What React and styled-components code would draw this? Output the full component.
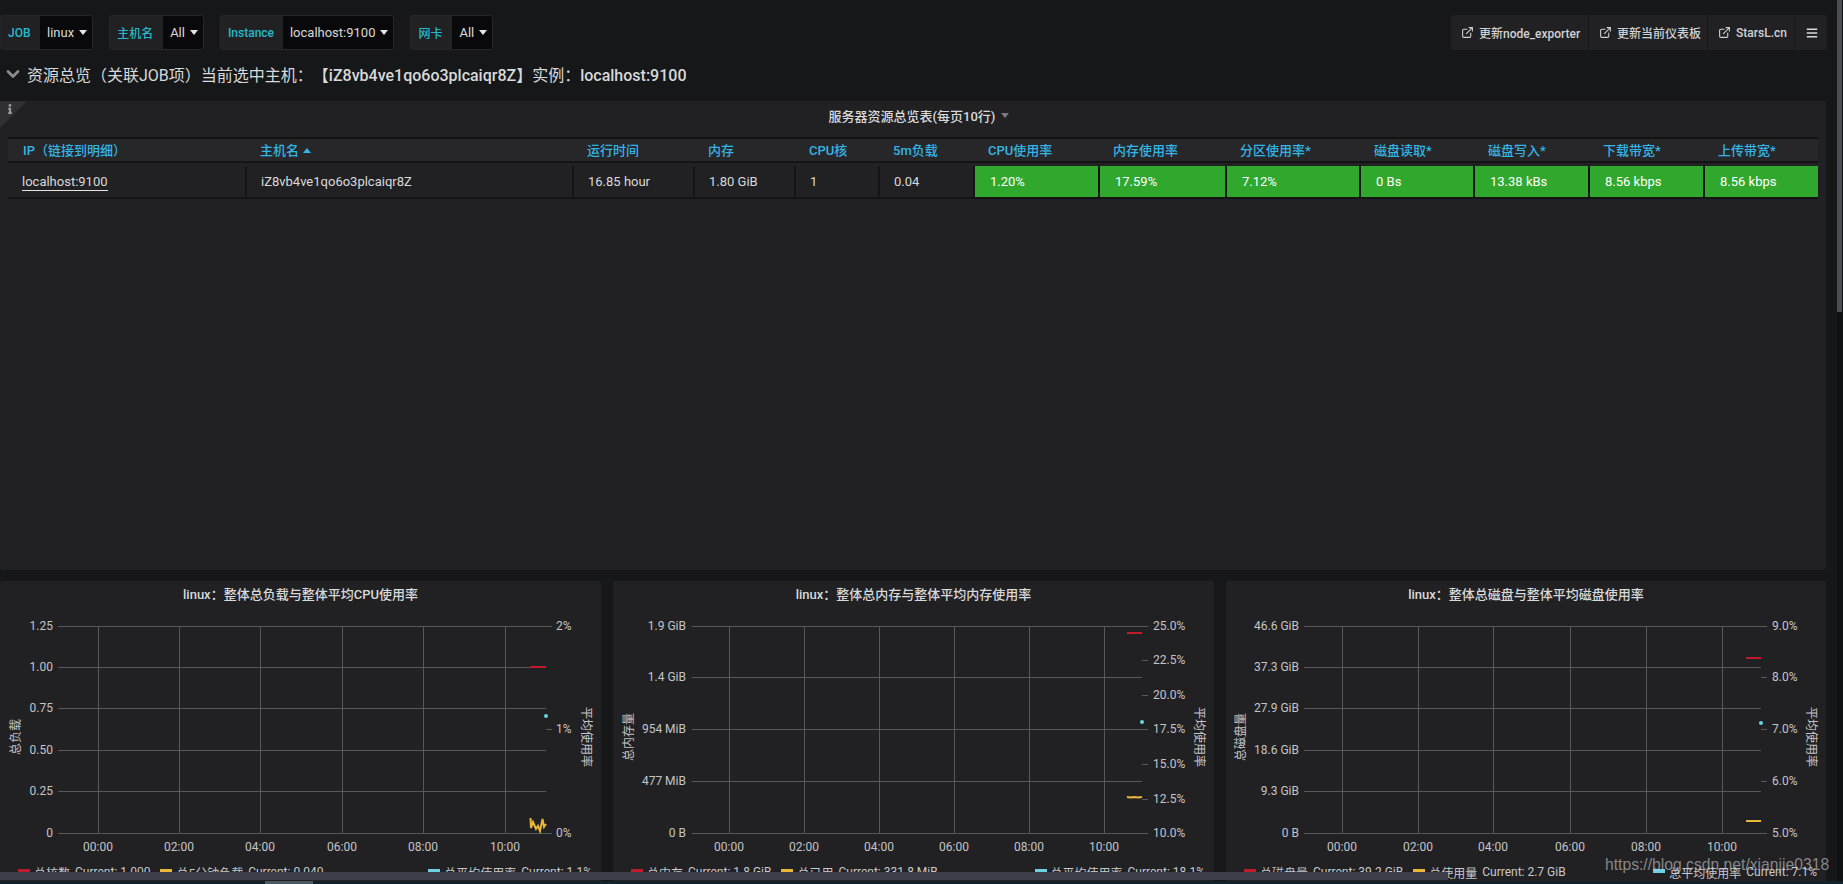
import styled, { createGlobalStyle } from 'styled-components';
import { ExternalLink, ChevronDown } from 'lucide-react';
import { FaBars, FaInfo } from 'react-icons/fa';

const GlobalStyle = createGlobalStyle`
  html, body {
    margin: 0;
    height: 100%;
    background: #161719;
    overflow: hidden;
  }
  body {
    color: #d8d9da;
    font-family: Roboto, "Noto Sans CJK SC", sans-serif;
    font-size: 13px;
  }
  * {
    box-sizing: border-box;
  }
`;

const Page = styled.div`
  position: relative;
  height: 100vh;
  overflow: hidden;
`;

const Toolbar = styled.div`
  display: flex;
  justify-content: space-between;
  padding: 15px 16px 0 0;
`;

const Variables = styled.div`
  display: flex;
  gap: 16px;
`;

const Variable = styled.div`
  display: flex;
  height: 35px;
  border: 1px solid #25252a;
  border-radius: 3px;
  overflow: hidden;
  background: #212124;
`;

const VariableLabel = styled.div`
  display: flex;
  align-items: center;
  width: ${(props) => props.$width}px;
  padding-left: 7px;
  color: #26b9cc;
  font-weight: 500;
  font-size: 12px;
`;

const VariableSelect = styled.div`
  display: flex;
  align-items: center;
  gap: 5px;
  padding: 0 5px 0 7px;
  background: #09090b;
  color: #d8d9da;
`;

const DownCaret = styled.span`
  width: 0;
  height: 0;
  border-left: 4px solid transparent;
  border-right: 4px solid transparent;
  border-top: 5px solid ${(props) => props.$color || '#e4e4e4'};
`;

const UpCaret = styled.span`
  display: inline-block;
  width: 0;
  height: 0;
  margin-left: 4px;
  vertical-align: 2px;
  border-left: 4px solid transparent;
  border-right: 4px solid transparent;
  border-bottom: 5px solid #33b5e5;
`;

const LinkBar = styled.div`
  display: flex;
  height: 35px;
  border-radius: 3px;
  background: #212124;
`;

const LinkButton = styled.div`
  display: flex;
  align-items: center;
  gap: 5px;
  width: ${(props) => props.$width}px;
  padding-left: 10px;
  border-right: 1px solid #161719;
  font-weight: 500;
  font-size: 12px;
  color: #d0d1d3;
`;

const MenuButton = styled.div`
  display: flex;
  align-items: center;
  width: 32px;
  padding-left: 11px;
  color: #d8d9da;
`;

const RowTitle = styled.div`
  display: flex;
  align-items: center;
  gap: 4px;
  height: 51px;
  padding: 0 0 3px 3px;
  font-size: 16px;
  color: #d8d9da;
`;

const Strong = styled.span`
  font-weight: 500;
  margin-left: ${(props) => props.$gap || 0}px;
`;

const TablePanel = styled.section`
  position: relative;
  height: 469px;
  margin-right: 17px;
  padding: 0 8px;
  border-radius: 3px;
  background: #212124;
`;

const CornerFlag = styled.div`
  position: absolute;
  top: 0;
  left: 0;
  width: 27px;
  height: 27px;
  padding: 3px 0 0 5px;
  background: #303034;
  clip-path: polygon(0 0, 100% 0, 0 100%);
  color: #9a9a9a;
  font-size: 10px;
`;

const PanelHeading = styled.div`
  display: flex;
  align-items: center;
  justify-content: center;
  gap: 6px;
  height: 36px;
  padding: 0 0 8px 12px;
  font-weight: 500;
  color: #d8d9da;
`;

const columns = '239px 327px 121px 101px 84px 95px 125px 127px 134px 114px 115px 115px 113px';

const HeadRow = styled.div`
  display: grid;
  grid-template-columns: ${columns};
  height: 26px;
  border-top: 2px solid #141414;
  border-bottom: 2px solid #141414;
  background: #27272a;
`;

const HeadCell = styled.div`
  display: flex;
  align-items: center;
  padding: 0 0 1px 13px;
  color: #33b5e5;
  font-weight: 500;
  white-space: nowrap;
  &:first-child {
    padding-left: 15px;
  }
`;

const BodyRow = styled.div`
  display: grid;
  grid-template-columns: ${columns};
  height: 33px;
  margin-top: 3px;
  border-bottom: 2px solid #141414;
`;

const Cell = styled.div`
  display: flex;
  align-items: center;
  padding: 0 0 1px 14px;
  border-right: 2px solid #141414;
  white-space: nowrap;
  &:last-child {
    border-right: 0;
  }
`;

const GreenCell = styled(Cell)`
  background: #2fa82d;
  color: #fff;
  padding-left: 15px;
`;

const HostLink = styled.span`
  border-bottom: 1px solid #e4e4e4;
  padding-bottom: 1px;
  margin-top: 2px;
`;

const ChartRow = styled.div`
  display: grid;
  grid-template-columns: 601px 601px 600px;
  column-gap: 12px;
  margin-top: 11px;
`;

const ChartPanel = styled.section`
  height: 320px;
  border-radius: 3px;
  background: #212124;
`;

const ChartTitle = styled.div`
  height: 28px;
  line-height: 28px;
  text-align: center;
  font-weight: 500;
  color: #d8d9da;
`;

const Plot = styled.svg`
  display: block;
  width: 100%;
  height: 250px;
`;

const AxisText = styled.text`
  fill: #c4c4c6;
  font-size: 12px;
  dominant-baseline: central;
`;

const GridLine = styled.line`
  stroke: #58585b;
  stroke-width: 1;
`;

const Legend = styled.div`
  display: flex;
  justify-content: space-between;
  align-items: center;
  height: 26px;
  padding: 0 9px 0 18px;
  color: #c8c8ca;
  font-size: 12px;
  white-space: nowrap;
`;

const LegendGroup = styled.div`
  display: flex;
  gap: 10px;
`;

const LegendItem = styled.div`
  display: flex;
  align-items: center;
  gap: 5px;
`;

const Swatch = styled.span`
  width: 12px;
  height: 4px;
  margin-right: -1px;
  margin-bottom: 2px;
  background: ${(props) => props.$color};
`;

const ScrollTrack = styled.div`
  position: absolute;
  top: 0;
  right: 0;
  bottom: 0;
  width: 6px;
  background: #101113;
`;

const ScrollThumb = styled.div`
  height: 312px;
  width: 5px;
  background: #4c4c54;
`;

const BottomOverlay = styled.div`
  position: absolute;
  left: 0;
  right: 0;
  bottom: 0;
  height: 12px;
`;

const OverlayBar = styled.div`
  width: 1448px;
  height: 8px;
  background: #3e3e4a;
`;

const OverlayStrip = styled.div`
  height: 3px;
  margin-top: 1px;
  padding-left: 265px;
  background: #12222a;
`;

const OverlayThumb = styled.div`
  width: 48px;
  height: 100%;
  background: #4a5a62;
`;

const Watermark = styled.div`
  position: absolute;
  left: 1605px;
  top: 856px;
  font-family: "Liberation Sans", sans-serif;
  font-size: 15.7px;
  color: rgba(205, 205, 205, 0.6);
  white-space: nowrap;
`;

const RED = '#bf1b2c';
const YELLOW = '#eab839';
const CYAN = '#6ed0e0';

const times = ['00:00', '02:00', '04:00', '06:00', '08:00', '10:00'];

const headers = ['IP（链接到明细）', '主机名', '运行时间', '内存', 'CPU核', '5m负载', 'CPU使用率', '内存使用率', '分区使用率*', '磁盘读取*', '磁盘写入*', '下载带宽*', '上传带宽*'];
const plainCells = ['16.85 hour', '1.80 GiB', '1', '0.04'];
const greenCells = ['1.20%', '17.59%', '7.12%', '0 Bs', '13.38 kBs', '8.56 kbps', '8.56 kbps'];

// all x values are page coordinates, y values are page coordinates too
const charts = [
  {
    title: 'linux：整体总负载与整体平均CPU使用率',
    left: 0,
    width: 601,
    gridLeft: 58,
    gridRight: 546,
    tickEnd: 552,
    verticals: [98, 179, 260, 342, 423, 505],
    leftTicks: [[626, '1.25'], [667, '1.00'], [708, '0.75'], [750, '0.50'], [791, '0.25'], [833, '0']],
    rightTicks: [[626, '2%'], [729, '1%'], [833, '0%']],
    leftTitle: '总负载',
    leftTitleX: 16,
    rightTitleX: 586,
    labelRight: 53,
    rightLabelX: 556,
    red: [530, 546, 667],
    yellow: '530.5,818 531,828 533,822 536,829 538,826 540,831 542.5,819 544,827 546,824',
    dot: [546, 716],
    legend: [
      ['总核数', 'Current: 1.000', RED],
      ['总5分钟负载', 'Current: 0.040', YELLOW],
      ['总平均使用率', 'Current: 1.1%', CYAN],
    ],
  },
  {
    title: 'linux：整体总内存与整体平均内存使用率',
    left: 613,
    width: 601,
    gridLeft: 692,
    gridRight: 1142,
    tickEnd: 1148,
    verticals: [729, 804, 879, 954, 1029, 1104],
    leftTicks: [[626, '1.9 GiB'], [677, '1.4 GiB'], [729, '954 MiB'], [781, '477 MiB'], [833, '0 B']],
    rightTicks: [[626, '25.0%'], [660, '22.5%'], [695, '20.0%'], [729, '17.5%'], [764, '15.0%'], [799, '12.5%'], [833, '10.0%']],
    leftTitle: '总内存量',
    leftTitleX: 629,
    rightTitleX: 1199,
    labelRight: 686,
    rightLabelX: 1153,
    red: [1127, 1142, 633],
    yellow: '1127,797 1131,797.5 1134,797 1138,797.5 1142,797',
    dot: [1142, 722],
    legend: [
      ['总内存', 'Current: 1.8 GiB', RED],
      ['总已用', 'Current: 331.8 MiB', YELLOW],
      ['总平均使用率', 'Current: 18.1%', CYAN],
    ],
  },
  {
    title: 'linux：整体总磁盘与整体平均磁盘使用率',
    left: 1226,
    width: 600,
    gridLeft: 1304,
    gridRight: 1761,
    tickEnd: 1767,
    verticals: [1342, 1418, 1493, 1570, 1646, 1722],
    leftTicks: [[626, '46.6 GiB'], [667, '37.3 GiB'], [708, '27.9 GiB'], [750, '18.6 GiB'], [791, '9.3 GiB'], [833, '0 B']],
    rightTicks: [[626, '9.0%'], [677, '8.0%'], [729, '7.0%'], [781, '6.0%'], [833, '5.0%']],
    leftTitle: '总磁盘量',
    leftTitleX: 1241,
    rightTitleX: 1811,
    labelRight: 1299,
    rightLabelX: 1772,
    red: [1746, 1761, 658],
    yellow: '1746,821 1761,821',
    dot: [1761, 723],
    legend: [
      ['总磁盘量', 'Current: 39.2 GiB', RED],
      ['总使用量', 'Current: 2.7 GiB', YELLOW],
      ['总平均使用率', 'Current: 7.1%', CYAN],
    ],
  },
];

const PLOT_TOP = 609;

function Chart({ chart }) {
  const toX = (x) => x - chart.left;
  const toY = (y) => y - PLOT_TOP;
  const yellowPoints = chart.yellow
    .split(' ')
    .map((p) => {
      const [x, y] = p.split(',').map(Number);
      return `${toX(x)},${toY(y)}`;
    })
    .join(' ');
  const midY = toY(737);

  return (
    <ChartPanel>
      <ChartTitle>{chart.title}</ChartTitle>
      <Plot viewBox={`0 0 ${chart.width} 250`}>
        {chart.verticals.map((x) => (
          <GridLine key={x} x1={toX(x) + 0.5} x2={toX(x) + 0.5} y1={toY(626)} y2={toY(833)} />
        ))}
        {chart.leftTicks.map(([y, label]) => (
          <g key={label}>
            <GridLine x1={toX(chart.gridLeft)} x2={toX(chart.gridRight)} y1={toY(y) + 0.5} y2={toY(y) + 0.5} />
            <AxisText x={toX(chart.labelRight)} y={toY(y)} textAnchor="end">
              {label}
            </AxisText>
          </g>
        ))}
        {chart.rightTicks.map(([y, label]) => (
          <g key={label}>
            <GridLine x1={toX(chart.gridRight)} x2={toX(chart.tickEnd)} y1={toY(y) + 0.5} y2={toY(y) + 0.5} />
            <AxisText x={toX(chart.rightLabelX)} y={toY(y)}>
              {label}
            </AxisText>
          </g>
        ))}
        {chart.verticals.map((x, i) => (
          <AxisText key={times[i]} x={toX(x)} y={toY(847)} textAnchor="middle">
            {times[i]}
          </AxisText>
        ))}
        <AxisText
          x={toX(chart.leftTitleX)}
          y={midY}
          textAnchor="middle"
          transform={`rotate(-90 ${toX(chart.leftTitleX)} ${midY})`}
        >
          {chart.leftTitle}
        </AxisText>
        <AxisText
          x={toX(chart.rightTitleX)}
          y={midY}
          textAnchor="middle"
          transform={`rotate(90 ${toX(chart.rightTitleX)} ${midY})`}
        >
          平均使用率
        </AxisText>
        <line
          x1={toX(chart.red[0])}
          x2={toX(chart.red[1])}
          y1={toY(chart.red[2])}
          y2={toY(chart.red[2])}
          stroke={RED}
          strokeWidth="2"
        />
        <polyline points={yellowPoints} fill="none" stroke={YELLOW} strokeWidth="2" />
        <circle cx={toX(chart.dot[0])} cy={toY(chart.dot[1])} r="2" fill={CYAN} />
      </Plot>
      <Legend>
        <LegendGroup>
          {chart.legend.slice(0, 2).map(([name, value, color]) => (
            <LegendItem key={name}>
              <Swatch $color={color} />
              <span>{name}</span>
              <span>{value}</span>
            </LegendItem>
          ))}
        </LegendGroup>
        <LegendGroup>
          {chart.legend.slice(2).map(([name, value, color]) => (
            <LegendItem key={name}>
              <Swatch $color={color} />
              <span>{name}</span>
              <span>{value}</span>
            </LegendItem>
          ))}
        </LegendGroup>
      </Legend>
    </ChartPanel>
  );
}

export default function App() {
  return (
    <Page>
      <GlobalStyle />
      <Toolbar>
        <Variables>
          <Variable>
            <VariableLabel $width={39}>JOB</VariableLabel>
            <VariableSelect>linux <DownCaret /></VariableSelect>
          </Variable>
          <Variable>
            <VariableLabel $width={53}>主机名</VariableLabel>
            <VariableSelect>All <DownCaret /></VariableSelect>
          </Variable>
          <Variable>
            <VariableLabel $width={62}>Instance</VariableLabel>
            <VariableSelect>localhost:9100 <DownCaret /></VariableSelect>
          </Variable>
          <Variable>
            <VariableLabel $width={41}>网卡</VariableLabel>
            <VariableSelect>All <DownCaret /></VariableSelect>
          </Variable>
        </Variables>
        <LinkBar>
          <LinkButton $width={138}><ExternalLink size={13} />更新node_exporter</LinkButton>
          <LinkButton $width={119}><ExternalLink size={13} />更新当前仪表板</LinkButton>
          <LinkButton $width={87}><ExternalLink size={13} />StarsL.cn</LinkButton>
          <MenuButton><FaBars size={12} /></MenuButton>
        </LinkBar>
      </Toolbar>

      <RowTitle>
        <ChevronDown size={20} strokeWidth={3.2} color="#8e8e8e" />
        <span>
          资源总览（关联JOB项）当前选中主机：<Strong $gap={8}>【iZ8vb4ve1qo6o3plcaiqr8Z】</Strong>实例：<Strong>localhost:9100</Strong>
        </span>
      </RowTitle>

      <TablePanel>
        <CornerFlag><FaInfo /></CornerFlag>
        <PanelHeading>
          服务器资源总览表(每页10行)
          <DownCaret $color="#7b7b7b" />
        </PanelHeading>
        <HeadRow>
          {headers.map((h) => (
            <HeadCell key={h}>
              <span>
                {h}
                {h === '主机名' && <UpCaret />}
              </span>
            </HeadCell>
          ))}
        </HeadRow>
        <BodyRow>
          <Cell><HostLink>localhost:9100</HostLink></Cell>
          <Cell>iZ8vb4ve1qo6o3plcaiqr8Z</Cell>
          {plainCells.map((v) => (
            <Cell key={v}>{v}</Cell>
          ))}
          {greenCells.map((v, i) => (
            <GreenCell key={i}>{v}</GreenCell>
          ))}
        </BodyRow>
      </TablePanel>

      <ChartRow>
        {charts.map((c) => (
          <Chart key={c.title} chart={c} />
        ))}
      </ChartRow>

      <Watermark>https://blog.csdn.net/xianjie0318</Watermark>
      <ScrollTrack><ScrollThumb /></ScrollTrack>
      <BottomOverlay>
        <OverlayBar />
        <OverlayStrip><OverlayThumb /></OverlayStrip>
      </BottomOverlay>
    </Page>
  );
}
